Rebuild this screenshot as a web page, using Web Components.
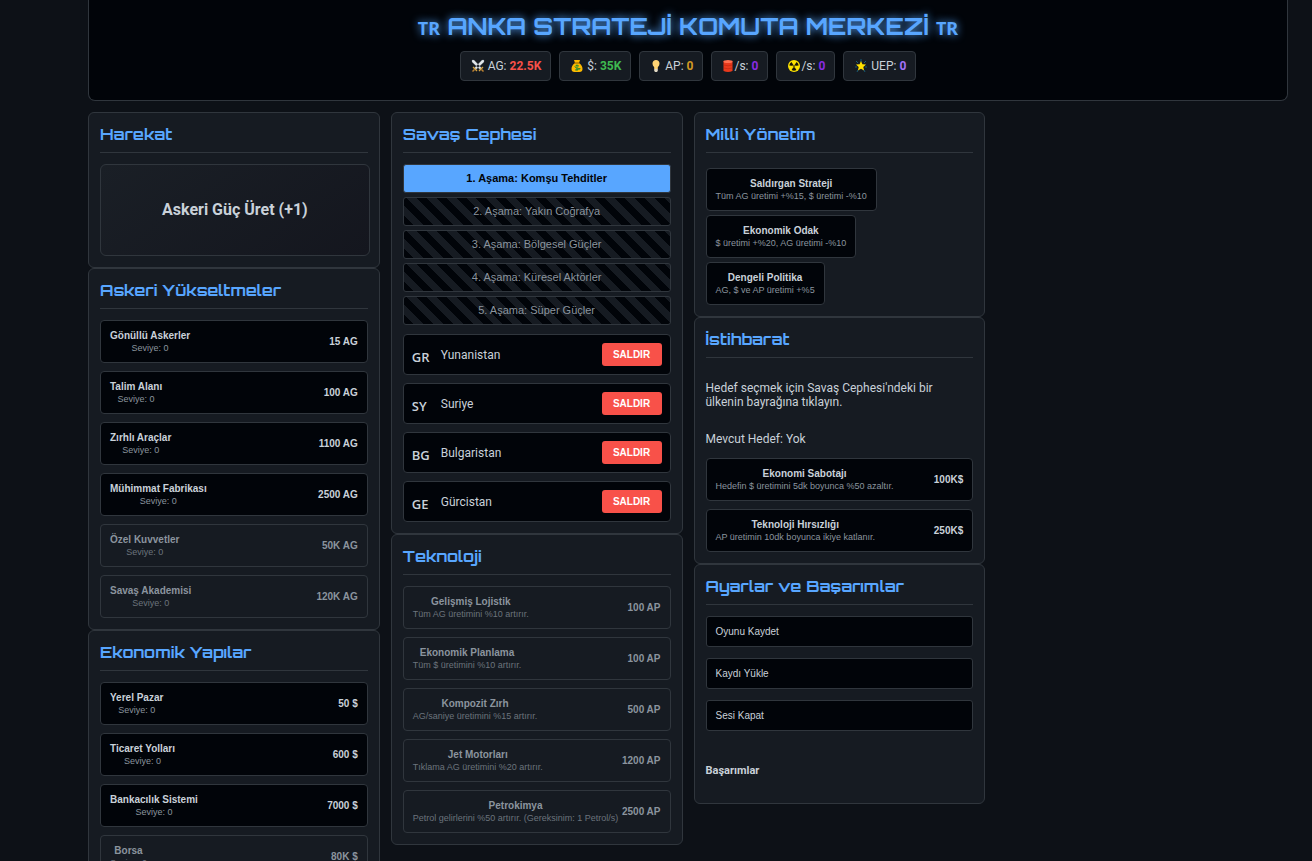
<!DOCTYPE html>
<html lang="tr">
<head>
<meta charset="UTF-8">
<meta name="viewport" content="width=device-width, initial-scale=1.0">
<title>Anka Strateji Komuta Merkezi</title>
<style>
  :root {
    --bg: #0d1117;
    --panel: #161b22;
    --deep: #010409;
    --line: #30363d;
    --text: #c9d1d9;
    --muted: #8b949e;
    --accent: #58a6ff;
    --danger: #f85149;
    --success: #3fb950;
    --gold: #d29922;
    --purple: #8a2be2;
    --violet: #a371f7;
    --display: 'Orbitron', 'DejaVu Sans', sans-serif;
    --ui: 'Liberation Sans', Arial, sans-serif;
    scrollbar-width: none;
  }
  body {
    margin: 0;
    background: var(--bg);
    color: var(--text);
    font: 12px/14px Roboto, sans-serif;
  }
</style>
</head>
<body>
<anka-game></anka-game>

<script>
// [width, markup], all drawn 14 high and centred on x = 7
const ICONS = {
  swords: [14, `
    <path d="M1 1h2l7.500 8-1.500 1.500L1 3zM13 1h-2L3.500 9 5 10.500 13 3z" fill="#e3e8ec" stroke="#7d868e" stroke-width=".3"/>
    <path d="M2 8l4 4M12 8l-4 4" stroke="#d9a441" stroke-width="1.300"/>
    <path d="M3.500 10.500l-2 2M10.500 10.500l2 2" stroke="#b98032" stroke-width="1.500"/>`],
  money: [14, `
    <path d="M4 1h6L9 4q3.500 2.500 3.500 6 0 3-3 3h-5q-3 0-3-3Q1.500 6.500 5 4z" fill="#fdb900"/>
    <path d="M4.500 4h5" stroke="#8a5a00" stroke-width="1"/>
    <path d="M9 7Q5 5.500 5 7.500T9 9.500 5 11M7 5.500v6.500" fill="none" stroke="#2f8f2f" stroke-width="1"/>`],
  bulb: [12, `
    <path d="M7 1a3.500 3.500 0 0 1 3.500 3.700q0 1.800-1.700 3.600V10H5.200V8.300Q3.500 6.500 3.500 4.700A3.500 3.500 0 0 1 7 1z" fill="#ffd374"/>
    <path d="M5.200 10h3.600v2l-1 1H6.200l-1-1z" fill="#e3d9c4"/>`],
  barrel: [12, `
    <path d="M2.500 2v10q4.500 2 9 0V2z" fill="#e8391c"/>
    <ellipse cx="7" cy="2.500" rx="4.500" ry="1.500" fill="#ff6f50"/>
    <path d="M2.500 6q4.500 1.500 9 0M2.500 9q4.500 1.500 9 0" fill="none" stroke="#b3240f" stroke-width=".5"/>`],
  nuclear: [14, `
    <circle cx="7" cy="7" r="6" fill="#fde300"/>
    <path d="M7 7L2.300 6.500A4.700 4.700 0 0 1 4.500 3zM7 7l4.700-.5A4.700 4.700 0 0 0 9.500 3zM7 7l-2.400 4a4.700 4.700 0 0 0 4.800 0z" fill="#16130a"/>
    <circle cx="7" cy="7" r="1.200" fill="#16130a" stroke="#fde300" stroke-width=".6"/>`],
  star: [14, `
    <path d="M7 0v3M2 2l2 2M12 2l-2 2M1 8h2M13 8h-2M3 13l1-2M11 13l-1-2" stroke="#155a78" stroke-width="1"/>
    <path d="M7 2l1.400 3.300L12 5.600 9.300 8l.8 3.500L7 9.700l-3.100 1.800L4.700 8 2 5.600l3.600-.3z" fill="#ffe100"/>`]
};

const STATS = [
  ['swords', ' AG:', '22.5K', 'danger'],
  ['money', ' $:', '35K', 'success'],
  ['bulb', ' AP:', '0', 'gold'],
  ['barrel', '/s:', '0', 'purple'],
  ['nuclear', '/s:', '0', 'purple'],
  ['star', ' UEP:', '0', 'violet']
];

const MILITARY = [
  ['Gönüllü Askerler', '15 AG'],
  ['Talim Alanı', '100 AG'],
  ['Zırhlı Araçlar', '1100 AG'],
  ['Mühimmat Fabrikası', '2500 AG'],
  ['Özel Kuvvetler', '50K AG', true],
  ['Savaş Akademisi', '120K AG', true]
];

const ECONOMY = [
  ['Yerel Pazar', '50 $'],
  ['Ticaret Yolları', '600 $'],
  ['Bankacılık Sistemi', '7000 $'],
  ['Borsa', '80K $', true]
];

const STAGES = [
  '1. Aşama: Komşu Tehditler',
  '2. Aşama: Yakın Coğrafya',
  '3. Aşama: Bölgesel Güçler',
  '4. Aşama: Küresel Aktörler',
  '5. Aşama: Süper Güçler'
];

const ENEMIES = [
  ['GR', 'Yunanistan'],
  ['SY', 'Suriye'],
  ['BG', 'Bulgaristan'],
  ['GE', 'Gürcistan']
];

const TECH = [
  ['Gelişmiş Lojistik', 'Tüm AG üretimini %10 artırır.', '100 AP'],
  ['Ekonomik Planlama', 'Tüm $ üretimini %10 artırır.', '100 AP'],
  ['Kompozit Zırh', 'AG/saniye üretimini %15 artırır.', '500 AP'],
  ['Jet Motorları', 'Tıklama AG üretimini %20 artırır.', '1200 AP'],
  ['Petrokimya', 'Petrol gelirlerini %50 artırır. (Gereksinim: 1 Petrol/s)', '2500 AP']
];

const POLICIES = [
  ['Saldırgan Strateji', 'Tüm AG üretimi +%15, $ üretimi -%10'],
  ['Ekonomik Odak', '$ üretimi +%20, AG üretimi -%10'],
  ['Dengeli Politika', 'AG, $ ve AP üretimi +%5']
];

const INTEL = [
  ['Ekonomi Sabotajı', 'Hedefin $ üretimini 5dk boyunca %50 azaltır.', '100K$'],
  ['Teknoloji Hırsızlığı', 'AP üretimin 10dk boyunca ikiye katlanır.', '250K$']
];

// Small base class: each element only supplies its template.
class AnkaElement extends HTMLElement {
  constructor() {
    super();
    this.attachShadow({ mode: 'open' });
  }

  connectedCallback() {
    this.shadowRoot.innerHTML = this.template();
  }
}

// One resource counter in the header.
class AnkaStat extends AnkaElement {
  template() {
    const [width, shapes] = ICONS[this.getAttribute('icon')];
    return `
      <style>
        :host {
          display: flex;
          align-items: center;
          padding: 7px 9px 7px 10px;
          background: var(--panel);
          border: 1px solid var(--line);
          border-radius: 4px;
          white-space: pre;
        }
        b { color: var(--${this.getAttribute('tone')}); font-weight: 700; }
      </style>
      <svg width="${width}" height="14" viewBox="${7 - width / 2} 0 ${width} 14" fill="none" aria-hidden="true">${shapes}</svg>
      <span><slot></slot> <b>${this.getAttribute('value')}</b></span>
    `;
  }
}

class AnkaHeader extends AnkaElement {
  template() {
    return `
      <style>
        :host {
          display: block;
          padding: 11px 11px 19px;
          background: var(--deep);
          border: 1px solid var(--line);
          border-top: 0;
          border-radius: 0 0 7px 7px;
          text-align: center;
        }
        h1 {
          margin: 0 0 8px;
          color: var(--accent);
          font: 700 24px/30px var(--display);
          text-shadow: 0 0 8px var(--accent);
        }
        h1 span { font: 700 18px/30px 'Noto Sans', sans-serif; }
        .stats { display: flex; flex-wrap: wrap; justify-content: center; gap: 8px; }
      </style>
      <h1><span>TR</span> ANKA STRATEJİ KOMUTA MERKEZİ <span>TR</span></h1>
      <div class="stats">
        ${STATS.map(([icon, label, value, tone]) =>
          `<anka-stat icon="${icon}" value="${value}" tone="${tone}">${label}</anka-stat>`).join('')}
      </div>
    `;
  }
}

// Titled box, body comes through the slot.
class AnkaPanel extends AnkaElement {
  template() {
    return `
      <style>
        :host {
          display: block;
          padding: 11px;
          background: var(--panel);
          border: 1px solid var(--line);
          border-radius: 6px;
        }
        h2 {
          margin: 0 0 11px;
          padding-bottom: 8px;
          border-bottom: 1px solid var(--line);
          color: var(--accent);
          font: 700 16px/20px var(--display);
        }
      </style>
      <h2>${this.getAttribute('heading')}</h2>
      <slot></slot>
    `;
  }
}

// Buyable item: name, a small note below it and an optional price.
class AnkaItem extends AnkaElement {
  template() {
    const cost = this.getAttribute('cost');
    return `
      <style>
        :host { display: block; }
        button {
          display: flex;
          justify-content: space-between;
          align-items: center;
          width: 100%;
          height: 43px;
          padding: 0 9px;
          background: var(--deep);
          border: 1px solid var(--line);
          border-radius: 4px;
          color: var(--text);
          font: 10px/12px var(--ui);
          text-align: center;
          cursor: pointer;
        }
        button:disabled { background: var(--panel); color: var(--muted); cursor: default; }
        b, small { display: block; white-space: nowrap; }
        small { color: var(--muted); font-size: 9px; }
        button:disabled small { color: #6b737c; }
      </style>
      <button type="button" ${this.hasAttribute('locked') ? 'disabled' : ''}>
        <span><b>${this.getAttribute('name')}</b><small>${this.getAttribute('note')}</small></span>
        ${cost ? `<b>${cost}</b>` : ''}
      </button>
    `;
  }
}

class AnkaStage extends AnkaElement {
  template() {
    return `
      <style>
        :host { display: block; }
        button {
          display: block;
          width: 100%;
          height: 29px;
          padding: 0;
          border: 1px solid var(--line);
          border-radius: 3px;
          background: var(--accent);
          color: var(--deep);
          font: 700 11px/13px var(--ui);
        }
        button:disabled {
          background: repeating-linear-gradient(45deg, var(--deep) 0 7px, var(--panel) 7px 14px);
          color: var(--muted);
          font-weight: 400;
        }
      </style>
      <button type="button" ${this.hasAttribute('locked') ? 'disabled' : ''}><slot></slot></button>
    `;
  }
}

class AnkaEnemy extends AnkaElement {
  template() {
    return `
      <style>
        :host {
          display: flex;
          align-items: center;
          height: 39px;
          padding: 0 8px;
          background: var(--deep);
          border: 1px solid var(--line);
          border-radius: 4px;
        }
        .flag {
          width: 29px;
          padding-top: 4px;
          color: var(--text);
          font: 600 13px/18px 'Open Sans', sans-serif;
        }
        .name { flex: 1; }
        button {
          width: 60px;
          height: 23px;
          padding: 0;
          background: var(--danger);
          border: 0;
          border-radius: 3px;
          color: #fff;
          font: 700 10px/12px var(--ui);
          cursor: pointer;
        }
      </style>
      <span class="flag">${this.getAttribute('code')}</span>
      <span class="name"><slot></slot></span>
      <button type="button">SALDIR</button>
    `;
  }
}

class AnkaGame extends AnkaElement {
  template() {
    const item = (name, note, cost, locked) =>
      `<anka-item name="${name}" note="${note}" ${cost ? `cost="${cost}"` : ''} ${locked ? 'locked' : ''}></anka-item>`;

    return `
      <style>
        :host { display: block; margin: 0 24px 0 88px; }
        .columns {
          display: grid;
          grid-template-columns: repeat(4, 1fr);
          align-items: start;
          gap: 11px;
          margin-top: 11px;
        }
        .list { display: grid; gap: 8px; }
        .stages { display: grid; gap: 4px; margin-bottom: 9px; }
        .policies { display: grid; justify-items: start; gap: 4px; padding-top: 4px; }
        .settings { display: grid; gap: 11px; }
        .produce {
          display: block;
          width: calc(100% + 2px);
          height: 92px;
          background: linear-gradient(145deg, #1a1f26, #14161e);
          border: 1px solid var(--line);
          border-radius: 6px;
          color: var(--text);
          font: 700 16px/20px Roboto, sans-serif;
        }
        .settings button {
          height: 31px;
          padding: 0 9px;
          background: var(--deep);
          border: 1px solid var(--line);
          border-radius: 3px;
          color: var(--text);
          font: 10px/12px var(--ui);
          text-align: left;
        }
        p { margin: 23px 0; }
        .target { margin: 0 0 12px; }
        h4 { margin: 33px 0 14px; font: 700 11px/14px Roboto, sans-serif; }
      </style>
      <anka-header></anka-header>
      <main class="columns">
        <div>
          <anka-panel heading="Harekat">
            <button type="button" class="produce">Askeri Güç Üret (+1)</button>
          </anka-panel>
          <anka-panel heading="Askeri Yükseltmeler">
            <div class="list">${MILITARY.map(([n, c, l]) => item(n, 'Seviye: 0', c, l)).join('')}</div>
          </anka-panel>
          <anka-panel heading="Ekonomik Yapılar">
            <div class="list">${ECONOMY.map(([n, c, l]) => item(n, 'Seviye: 0', c, l)).join('')}</div>
          </anka-panel>
        </div>
        <div>
          <anka-panel heading="Savaş Cephesi">
            <div class="stages">
              ${STAGES.map((s, i) => `<anka-stage ${i ? 'locked' : ''}>${s}</anka-stage>`).join('')}
            </div>
            <div class="list">
              ${ENEMIES.map(([code, name]) => `<anka-enemy code="${code}">${name}</anka-enemy>`).join('')}
            </div>
          </anka-panel>
          <anka-panel heading="Teknoloji">
            <div class="list">${TECH.map(([n, d, c]) => item(n, d, c, true)).join('')}</div>
          </anka-panel>
        </div>
        <div>
          <anka-panel heading="Milli Yönetim">
            <div class="policies">${POLICIES.map(([n, d]) => item(n, d)).join('')}</div>
          </anka-panel>
          <anka-panel heading="İstihbarat">
            <p>Hedef seçmek için Savaş Cephesi'ndeki bir ülkenin bayrağına tıklayın.</p>
            <p class="target">Mevcut Hedef: Yok</p>
            <div class="list">${INTEL.map(([n, d, c]) => item(n, d, c)).join('')}</div>
          </anka-panel>
          <anka-panel heading="Ayarlar ve Başarımlar">
            <div class="settings">
              <button type="button">Oyunu Kaydet</button>
              <button type="button">Kaydı Yükle</button>
              <button type="button">Sesi Kapat</button>
            </div>
            <h4>Başarımlar</h4>
          </anka-panel>
        </div>
      </main>
    `;
  }
}

customElements.define('anka-stat', AnkaStat);
customElements.define('anka-header', AnkaHeader);
customElements.define('anka-panel', AnkaPanel);
customElements.define('anka-item', AnkaItem);
customElements.define('anka-stage', AnkaStage);
customElements.define('anka-enemy', AnkaEnemy);
customElements.define('anka-game', AnkaGame);
</script>
</body>
</html>
